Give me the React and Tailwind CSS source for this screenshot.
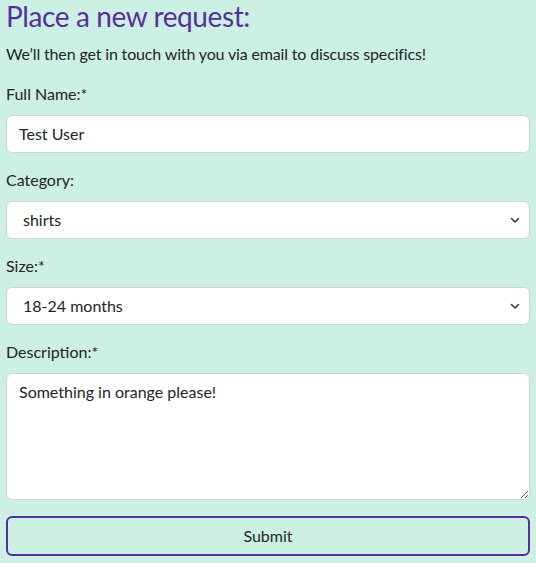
export default function App() {
  const font = { fontFamily: "Lato, 'Open Sans', sans-serif" };
  const Chevron = () => (
    <svg className="pointer-events-none absolute right-[10px] top-[15px]" width="10" height="8" viewBox="0 0 10 8">
      <path d="M1.5 2.5l3.5 3.5 3.5-3.5" fill="none" stroke="#343a40" strokeWidth="1.6" strokeLinecap="round" strokeLinejoin="round" />
    </svg>
  );
  return (
    <div className="min-h-[563px] w-full bg-[#cdf0e4] px-[6px] text-[#212529]" style={font}>
      <h3 className="mb-2 pt-0 text-[28px] leading-[1.2] tracking-[-0.4px] text-[#55309c]">Place a new request:</h3>
      <p className="mb-4 text-[16px] leading-6 tracking-[-0.15px]">We’ll then get in touch with you via email to discuss specifics!</p>
      <form onSubmit={(e) => e.preventDefault()}>
        <div className="mb-[15px]">
          <label className="mb-[9px] block text-[16px] leading-6">Full Name:*</label>
          <input
            defaultValue="Test User"
            className="block h-[38px] w-full rounded-[6px] border border-[#ced4da] bg-white px-3 text-[16px] text-[#212529] outline-none"
          />
        </div>
        <div className="mb-[15px]">
          <label className="mb-[9px] block text-[16px] leading-6">Category:</label>
          <div className="relative">
            <select
              defaultValue="shirts"
              className="block h-[38px] w-full appearance-none rounded-[6px] border border-[#ced4da] bg-white pl-4 pr-9 text-[16px] text-[#212529] outline-none"
            >
              <option value="shirts">shirts</option>
            </select>
            <Chevron />
          </div>
        </div>
        <div className="mb-[15px]">
          <label className="mb-[9px] block text-[16px] leading-6">Size:*</label>
          <div className="relative">
            <select
              defaultValue="18-24"
              className="block h-[38px] w-full appearance-none rounded-[6px] border border-[#ced4da] bg-white pl-4 pr-9 text-[16px] text-[#212529] outline-none"
            >
              <option value="18-24">18-24 months</option>
            </select>
            <Chevron />
          </div>
        </div>
        <div className="mb-4">
          <label className="mb-[9px] block text-[16px] leading-6">Description:*</label>
          <textarea
            defaultValue="Something in orange please!"
            className="block h-[127px] w-full rounded-[6px] border border-[#ced4da] bg-white px-3 py-[6px] text-[16px] leading-6 text-[#212529] outline-none"
          />
        </div>
        <button
          type="submit"
          className="block h-[40px] w-full rounded-[6px] border-2 border-[#51309a] bg-transparent text-[16px] text-[#212529]"
        >
          Submit
        </button>
      </form>
    </div>
  );
}
